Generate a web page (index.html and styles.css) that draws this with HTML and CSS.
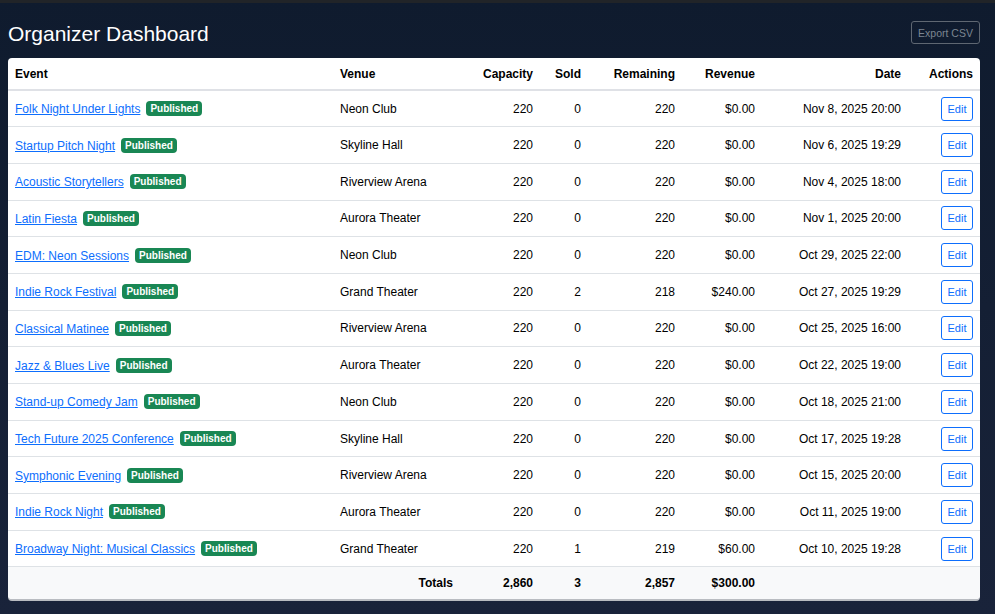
FILE: index.html
```html
<!DOCTYPE html>
<html>
<head>
<meta charset="utf-8">
<link rel="stylesheet" href="styles.css">
</head>
<body>
<div class="topbar"></div>
<main class="page">
  <header class="head">
    <h1 class="title">Organizer Dashboard</h1>
    <button class="export">Export CSV</button>
  </header>
  <div class="card">
    <table class="tbl">
      <colgroup>
        <col class="c-event"><col class="c-venue"><col class="c-cap"><col class="c-sold"><col class="c-rem"><col class="c-rev"><col class="c-date"><col class="c-act">
      </colgroup>
      <thead>
        <tr><th>Event</th><th>Venue</th><th class="r">Capacity</th><th class="r">Sold</th><th class="r">Remaining</th><th class="r">Revenue</th><th class="r">Date</th><th class="r">Actions</th></tr>
      </thead>
      <tbody>
        <tr><td><a href="#">Folk Night Under Lights</a><span class="badge">Published</span></td><td>Neon Club</td><td class="r">220</td><td class="r">0</td><td class="r">220</td><td class="r">$0.00</td><td class="r">Nov 8, 2025 20:00</td><td class="r"><button class="edit">Edit</button></td></tr>
        <tr><td><a href="#">Startup Pitch Night</a><span class="badge">Published</span></td><td>Skyline Hall</td><td class="r">220</td><td class="r">0</td><td class="r">220</td><td class="r">$0.00</td><td class="r">Nov 6, 2025 19:29</td><td class="r"><button class="edit">Edit</button></td></tr>
        <tr><td><a href="#">Acoustic Storytellers</a><span class="badge">Published</span></td><td>Riverview Arena</td><td class="r">220</td><td class="r">0</td><td class="r">220</td><td class="r">$0.00</td><td class="r">Nov 4, 2025 18:00</td><td class="r"><button class="edit">Edit</button></td></tr>
        <tr><td><a href="#">Latin Fiesta</a><span class="badge">Published</span></td><td>Aurora Theater</td><td class="r">220</td><td class="r">0</td><td class="r">220</td><td class="r">$0.00</td><td class="r">Nov 1, 2025 20:00</td><td class="r"><button class="edit">Edit</button></td></tr>
        <tr><td><a href="#">EDM: Neon Sessions</a><span class="badge">Published</span></td><td>Neon Club</td><td class="r">220</td><td class="r">0</td><td class="r">220</td><td class="r">$0.00</td><td class="r">Oct 29, 2025 22:00</td><td class="r"><button class="edit">Edit</button></td></tr>
        <tr><td><a href="#">Indie Rock Festival</a><span class="badge">Published</span></td><td>Grand Theater</td><td class="r">220</td><td class="r">2</td><td class="r">218</td><td class="r">$240.00</td><td class="r">Oct 27, 2025 19:29</td><td class="r"><button class="edit">Edit</button></td></tr>
        <tr><td><a href="#">Classical Matinee</a><span class="badge">Published</span></td><td>Riverview Arena</td><td class="r">220</td><td class="r">0</td><td class="r">220</td><td class="r">$0.00</td><td class="r">Oct 25, 2025 16:00</td><td class="r"><button class="edit">Edit</button></td></tr>
        <tr><td><a href="#">Jazz &amp; Blues Live</a><span class="badge">Published</span></td><td>Aurora Theater</td><td class="r">220</td><td class="r">0</td><td class="r">220</td><td class="r">$0.00</td><td class="r">Oct 22, 2025 19:00</td><td class="r"><button class="edit">Edit</button></td></tr>
        <tr><td><a href="#">Stand-up Comedy Jam</a><span class="badge">Published</span></td><td>Neon Club</td><td class="r">220</td><td class="r">0</td><td class="r">220</td><td class="r">$0.00</td><td class="r">Oct 18, 2025 21:00</td><td class="r"><button class="edit">Edit</button></td></tr>
        <tr><td><a href="#">Tech Future 2025 Conference</a><span class="badge">Published</span></td><td>Skyline Hall</td><td class="r">220</td><td class="r">0</td><td class="r">220</td><td class="r">$0.00</td><td class="r">Oct 17, 2025 19:28</td><td class="r"><button class="edit">Edit</button></td></tr>
        <tr><td><a href="#">Symphonic Evening</a><span class="badge">Published</span></td><td>Riverview Arena</td><td class="r">220</td><td class="r">0</td><td class="r">220</td><td class="r">$0.00</td><td class="r">Oct 15, 2025 20:00</td><td class="r"><button class="edit">Edit</button></td></tr>
        <tr><td><a href="#">Indie Rock Night</a><span class="badge">Published</span></td><td>Aurora Theater</td><td class="r">220</td><td class="r">0</td><td class="r">220</td><td class="r">$0.00</td><td class="r">Oct 11, 2025 19:00</td><td class="r"><button class="edit">Edit</button></td></tr>
        <tr><td><a href="#">Broadway Night: Musical Classics</a><span class="badge">Published</span></td><td>Grand Theater</td><td class="r">220</td><td class="r">1</td><td class="r">219</td><td class="r">$60.00</td><td class="r">Oct 10, 2025 19:28</td><td class="r"><button class="edit">Edit</button></td></tr>
      </tbody>
      <tfoot>
        <tr><td colspan="2" class="r">Totals</td><td class="r">2,860</td><td class="r">3</td><td class="r">2,857</td><td class="r">$300.00</td><td></td><td></td></tr>
      </tfoot>
    </table>
  </div>
</main>
</body>
</html>
```

FILE: styles.css
```css
html, body {
  margin: 0;
  padding: 0;
}
body {
  background: linear-gradient(#0f1b2e, #19233a);
  min-height: 614px;
  font-family: "Liberation Sans", Arial, sans-serif;
  color: #000;
}
.topbar {
  height: 3px;
  background: #212428;
}
.page {
  padding: 0 15px 0 8px;
}
.head {
  display: flex;
  align-items: center;
  justify-content: space-between;
  height: 55px;
}
.title {
  margin: 0;
  font-size: 21px;
  font-weight: normal;
  color: #fff;
  padding-top: 6px;
}
.export {
  font-family: "Liberation Sans", Arial, sans-serif;
  font-size: 10.5px;
  color: #7c8591;
  background: transparent;
  border: 1px solid #5f6772;
  border-radius: 3px;
  height: 23px;
  width: 69px;
  padding: 0;
  margin-top: 4px;
}
.card {
  background: #fff;
  border-radius: 4px;
  overflow: hidden;
  box-shadow: 0 2px 0 #b9bcc1;
}
.tbl {
  width: 100%;
  border-collapse: collapse;
  table-layout: fixed;
  font-size: 12px;
}
.c-event { width: 325px; }
.c-venue { width: 127px; }
.c-cap { width: 80px; }
.c-sold { width: 48px; }
.c-rem { width: 94px; }
.c-rev { width: 80px; }
.c-date { width: 146px; }
.c-act { width: 72px; }
.tbl th {
  text-align: left;
  font-weight: bold;
  height: 31px;
  padding: 0 7px;
  border-bottom: 2px solid #dfe1e6;
}
.tbl td {
  height: 36.7px;
  padding: 0 7px;
  border-bottom: 1px solid #dee2e6;
  box-sizing: border-box;
  white-space: nowrap;
}
.tbl .r {
  text-align: right;
}
.tbl tfoot td {
  background: #f8f9fa;
  font-weight: bold;
  height: 32px;
  border-bottom: none;
}
.tbl a {
  color: #0d6efd;
  text-decoration: underline;
}
.badge {
  display: inline-block;
  margin-left: 6px;
  background: #198754;
  color: #fff;
  font-size: 10px;
  font-weight: bold;
  line-height: 11px;
  padding: 2px 4px;
  border-radius: 4px;
  vertical-align: 1px;
}
.edit {
  font-family: "Liberation Sans", Arial, sans-serif;
  font-size: 11px;
  color: #0d6efd;
  background: #fff;
  border: 1px solid #0d6efd;
  border-radius: 3px;
  height: 24px;
  width: 32px;
  padding: 0;
}
```
